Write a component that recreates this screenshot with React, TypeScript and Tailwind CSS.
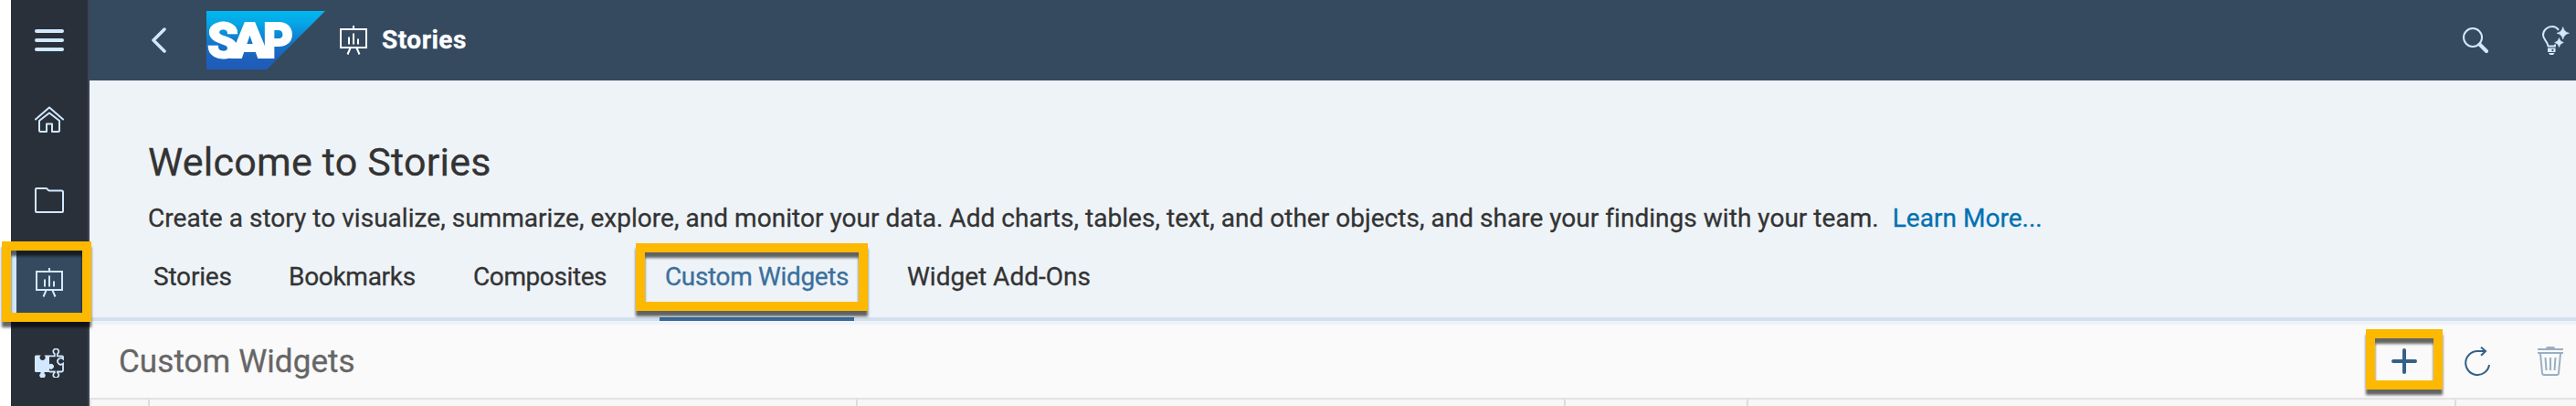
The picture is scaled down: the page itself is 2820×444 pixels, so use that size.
import React from 'react';

function EaselIcon({ className }: { className: string }) {
  return (
    <svg width="30" height="32" viewBox="0 0 30 32" fill="none" stroke="currentColor" strokeWidth="2" className={className}>
      <path d="M1 4h28v20H1z" />
      <path d="M15 0v4M11.5 24.5 8.5 31.5M18.5 24.5l3 7" />
      <path d="M10 12.500v8M15 8.500v12M20 14.500v6" />
    </svg>
  );
}

function HomeIcon() {
  return (
    <svg width="32" height="30" viewBox="0 0 32 30" fill="none" stroke="currentColor" strokeWidth="2" strokeLinejoin="round" strokeLinecap="round">
      <path d="M1 14.500 16 1.500 31 14.500" />
      <path d="M5 16v10.500q0 1.500 1.500 1.500H13V19.500h6V28h6.500q1.500 0 1.500-1.500V16L16 7.500Z" />
    </svg>
  );
}

function FolderIcon() {
  return (
    <svg width="32" height="28" viewBox="0 0 32 28" fill="none" stroke="currentColor" strokeWidth="2" strokeLinejoin="round">
      <path d="M1 26V2q0-1 1-1h10.500q1 0 1.700 1.200T16 3.500h13.500q1.500 0 1.500 1.500V26q0 1-1 1H2q-1 0-1-1Z" />
    </svg>
  );
}

function PuzzleIcon() {
  return (
    <svg width="32" height="32" viewBox="0 0 32 32" fill="none" stroke="currentColor" strokeWidth="1.800">
      <path
        d="M1.500 7.500H6.800a3.100 3.100 0 1 0 3.600 0H16v10a3 3 0 1 1 0 4.600V26h-5.500v1.200a3.100 3.100 0 1 1-4 0V26H1.500Q0 26 0 24.500V9Q0 7.500 1.500 7.500Z"
        fill="currentColor"
        stroke="none"
      />
      <path d="M16 8.300h5.800V6a3 3 0 1 1 3 0v2.300H30q1 0 1 1v2.200a3.500 3.500 0 1 0 0 5.200V24q0 1.500-1.500 1.500h-4.700v1a3 3 0 1 1-3 0v-1H16" />
    </svg>
  );
}

function BulbIcon() {
  return (
    <svg width="30" height="32" viewBox="0 0 30 32" fill="none" stroke="currentColor" strokeWidth="2">
      <path d="M18 4.800Q15 1 11 1C5.500 1 1 5 1 10.300 1 15.500 6.300 17.500 6.500 22.500H14V20.500" strokeLinejoin="round" />
      <path d="M6 24.500h8.500v4.500H6zM7 30h6.500l-1.500 2H8.500z" fill="currentColor" stroke="none" />
      <path d="M10.500 25.800h1.800v2.200h-1.800z" fill="#354a5f" stroke="none" />
      <path
        d="M22.700 1.500Q23.800 7 29.500 8.300 23.800 9.500 22.700 15 21.600 9.500 16 8.300 21.600 7 22.700 1.500ZM18.500 13.500q.8 4 4.800 5-4 1-4.800 5-.8-4-4.800-5 4-1 4.800-5Z"
        fill="currentColor"
        stroke="currentColor"
        strokeWidth="0.600"
      />
    </svg>
  );
}

function SapLogo() {
  return (
    <svg width="130" height="64" viewBox="0 0 130 64">
      <defs>
        <linearGradient id="sap" x1="0" y1="0" x2="0" y2="1">
          <stop offset="0" stopColor="#00b8f1" />
          <stop offset="0.220" stopColor="#06a5e5" />
          <stop offset="0.500" stopColor="#117bcd" />
          <stop offset="0.800" stopColor="#1d61bc" />
          <stop offset="1" stopColor="#1f5bb8" />
        </linearGradient>
      </defs>
      <path d="M0 0H130L66 64H0Z" fill="url(#sap)" />
      <g className="font-['Roboto',sans-serif] font-black" fontSize="53" fill="#fff" stroke="#fff" strokeWidth="1.800">
        <text x="1" y="50.500" textLength="34" lengthAdjust="spacingAndGlyphs">S</text>
        <text x="27" y="50.500" textLength="41" lengthAdjust="spacingAndGlyphs">A</text>
        <text x="62" y="50.500" textLength="33" lengthAdjust="spacingAndGlyphs">P</text>
      </g>
    </svg>
  );
}

const item = 'flex h-[88px] w-full shrink-0 items-center justify-center';
const tab = 'flex h-full flex-col justify-between whitespace-nowrap';
const callout = 'pointer-events-none absolute border-[10px] border-[#fcb900] drop-shadow-[0_6px_1.5px_rgba(0,0,0,0.6)]';

export default function App() {
  return (
    <div className="relative flex h-[444px] w-[2820px] overflow-hidden bg-white pl-3 font-['Roboto',sans-serif] text-[#333] [-webkit-text-stroke:0.3px]">
      <aside className="flex w-[86px] shrink-0 flex-col overflow-hidden border-r-2 border-[#3a4554] bg-[#2a303a] text-[#d1e8ff]">
        <div className={item}>
          <div className="flex flex-col gap-1.5">
            <span className="h-1 w-8 rounded-full bg-current" />
            <span className="h-1 w-8 rounded-full bg-current" />
            <span className="h-1 w-8 rounded-full bg-current" />
          </div>
        </div>
        <div className={`${item} pb-0.5`}><HomeIcon /></div>
        <div className={`${item} pb-0.5`}><FolderIcon /></div>
        <div className="flex h-[88px] w-[84px] shrink-0 items-center border-l-[6px] border-[#d1e8ff] bg-[#354a5f] pl-[21px]">
          <EaselIcon className="mt-0.5" />
        </div>
        <div className={`${item} pt-0.5`}><PuzzleIcon /></div>
      </aside>

      <main className="flex min-w-0 flex-1 flex-col">
        <header className="flex h-[88px] shrink-0 items-center bg-[#354a5f] pl-[68px] pr-[7px] text-[#d1e8ff]">
          <svg width="16" height="28" viewBox="0 0 16 28" fill="none" stroke="currentColor" strokeWidth="3.500" strokeLinecap="round" strokeLinejoin="round">
            <path d="M14 2 2 14l12 12" />
          </svg>
          <div className="ml-11"><SapLogo /></div>
          <EaselIcon className="ml-4 text-white" />
          <span className="ml-4 text-[28px] font-bold leading-10 tracking-[0.5px] text-white">Stories</span>
          <svg className="ml-auto" width="28" height="28" viewBox="0 0 28 28" fill="none" stroke="currentColor" strokeWidth="2">
            <circle cx="11" cy="11" r="10" />
            <path d="m18.500 18.500 7.500 7.500" strokeWidth="4" strokeLinecap="round" />
          </svg>
          <div className="ml-[59px]"><BulbIcon /></div>
        </header>

        <section className="flex h-[267px] shrink-0 flex-col bg-[#eef3f8] pt-[61px]">
          <h1 className="pl-16 text-[43px] leading-[56px] tracking-[0.23px]">Welcome to Stories</h1>
          <p className="mt-[14px] flex whitespace-nowrap pl-16 text-[28px] leading-10 tracking-[0.03px]">
            <span>Create a story to visualize, summarize, explore, and monitor your data. Add charts, tables, text, and other objects, and share your findings with your team.</span>
            <a className="ml-[15px] text-[#0070b1]">Learn More...</a>
          </p>
          <nav className="flex h-[92px] border-b-4 border-[#d1dfee] pl-16 pt-6 text-[28px] leading-10">
            <span className={`${tab} w-[149px] pl-[6px] tracking-[-0.2px]`}>Stories</span>
            <span className={`${tab} w-[201px] pl-[5px] tracking-[-0.3px]`}>Bookmarks</span>
            <span className={`${tab} w-[210px] pl-[6px] tracking-[-0.4px]`}>Composites</span>
            <span className={`${tab} mr-[51px] w-[213px] text-[#3b6f9c]`}>
              <span className="pl-[6px] tracking-[-0.35px]">Custom Widgets</span>
              <span className="-mb-1 h-1 w-full shrink-0 bg-[#3b6a96]" />
            </span>
            <span className={`${tab} pl-[7px]`}>Widget Add-Ons</span>
          </nav>
        </section>

        <section className="flex h-20 shrink-0 items-center bg-[#fafafa] pl-8 pr-[14px] text-[#346187]">
          <h2 className="pt-px text-[35px] leading-10 tracking-[0.08px] text-[#666]">Custom Widgets</h2>
          <svg className="ml-auto" width="28" height="28" viewBox="0 0 28 28" fill="none" stroke="currentColor" strokeWidth="4" strokeLinecap="round">
            <path d="M2 14h24M14 2v24" />
          </svg>
          <svg className="ml-[52px]" width="28" height="32" viewBox="0 0 28 32" fill="none" stroke="currentColor" strokeWidth="2">
            <path d="M27 20A13 13 0 1 1 14 5h9" />
            <path d="m18 .7 5 4.300-5 4.700" />
          </svg>
          <svg className="ml-[52px] text-[#9aafc3]" width="28" height="32" viewBox="0 0 28 32" fill="none" stroke="currentColor" strokeWidth="2">
            <path d="M0 3h28M0 7h28" />
            <path d="M9 2q0-2 2-2h6q2 0 2 2z" fill="currentColor" stroke="none" />
            <path d="m3 8 2 21q.2 2 2 2h14q1.800 0 2-2l2-21M8.500 12l1 14M14 12v14M19.500 12l-1 14" />
          </svg>
        </section>

        <div className="flex flex-1 border-l-2 border-t-2 border-[#e3e3e3] bg-[#f7f7f7]">
          <div className="w-16 shrink-0 border-r-2 border-[#ddd]" />
          <div className="w-[775px] shrink-0 border-r-2 border-[#ddd]" />
          <div className="w-[775px] shrink-0 border-r-2 border-[#ddd]" />
          <div className="w-[200px] shrink-0 border-r-2 border-[#ddd]" />
          <div className="w-[775px] shrink-0 border-r-2 border-[#ddd]" />
        </div>
      </main>

      <div className={`${callout} left-[2px] top-[264px] h-[88px] w-[98px]`} />
      <div className={`${callout} left-[696px] top-[266px] h-[74px] w-[254px]`} />
      <div className={`${callout} left-[2590px] top-[360px] h-[66px] w-[84px]`} />
    </div>
  );
}
